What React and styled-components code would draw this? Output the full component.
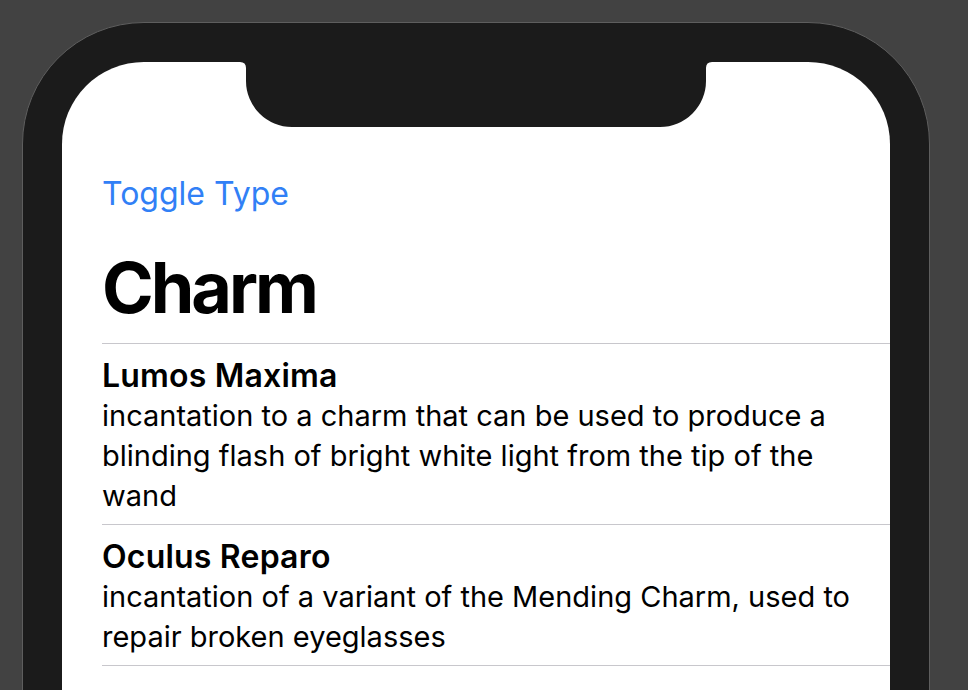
import React from "react";
import styled, { createGlobalStyle } from "styled-components";

const Global = createGlobalStyle`
  html, body { margin: 0; padding: 0; background: #424242; overflow: hidden; }
  #root { height: 690px; }
`;

const Stage = styled.div`
  height: 690px;
  overflow: hidden;
  padding: 22px 0 0 22px;
  box-sizing: border-box;
  font-family: Inter, "Liberation Sans", sans-serif;
`;

const Phone = styled.div`
  width: 908px;
  height: 900px;
  box-sizing: border-box;
  border: 1px solid #5e5e5e;
  border-radius: 122px;
  background: #1b1b1b;
  padding: 39px;
`;

const Screen = styled.div`
  position: relative;
  height: 100%;
  background: #ffffff;
  border-radius: 82px;
  padding: 113px 0 0 40px;
  box-sizing: border-box;
`;

const Notch = styled.svg`
  position: absolute;
  top: 0;
  left: 50%;
  transform: translateX(-50%);
  display: block;
`;

const ToggleButton = styled.button`
  display: block;
  border: 0;
  background: none;
  padding: 0;
  font: inherit;
  font-size: 32px;
  line-height: 38px;
  color: #3180f6;
  cursor: pointer;
`;

const Title = styled.h1`
  margin: 31px 0 0;
  font-size: 70px;
  line-height: 88px;
  font-weight: 700;
  color: #000;
  letter-spacing: -3px;
`;

const List = styled.ul`
  list-style: none;
  margin: 11px 0 0;
  padding: 0;
  border-top: 1px solid #c8c7cc;
`;

const Row = styled.li`
  padding: 12px 28px 8px 0;
  border-bottom: 1px solid #c8c7cc;
`;

const Name = styled.div`
  font-size: 32px;
  line-height: 40px;
  font-weight: 600;
  letter-spacing: 0.2px;
  color: #000;
`;

const Desc = styled.div`
  font-size: 29px;
  line-height: 40px;
  color: #000;
`;

const spells = [
  {
    name: "Lumos Maxima",
    desc: "incantation to a charm that can be used to produce a blinding flash of bright white light from the tip of the wand",
  },
  {
    name: "Oculus Reparo",
    desc: "incantation of a variant of the Mending Charm, used to repair broken eyeglasses",
  },
];

export default function App() {
  return (
    <>
      <Global />
      <Stage>
        <Phone>
          <Screen>
            <Notch width="472" height="65" viewBox="0 0 472 65">
              <path
                d="M0 0 Q6 0 6 6 L6 19 A46 46 0 0 0 52 65 L420 65 A46 46 0 0 0 466 19 L466 6 Q466 0 472 0 Z"
                fill="#1b1b1b"
              />
            </Notch>
            <ToggleButton>Toggle Type</ToggleButton>
            <Title>Charm</Title>
            <List>
              {spells.map((s) => (
                <Row key={s.name}>
                  <Name>{s.name}</Name>
                  <Desc>{s.desc}</Desc>
                </Row>
              ))}
            </List>
          </Screen>
        </Phone>
      </Stage>
    </>
  );
}
